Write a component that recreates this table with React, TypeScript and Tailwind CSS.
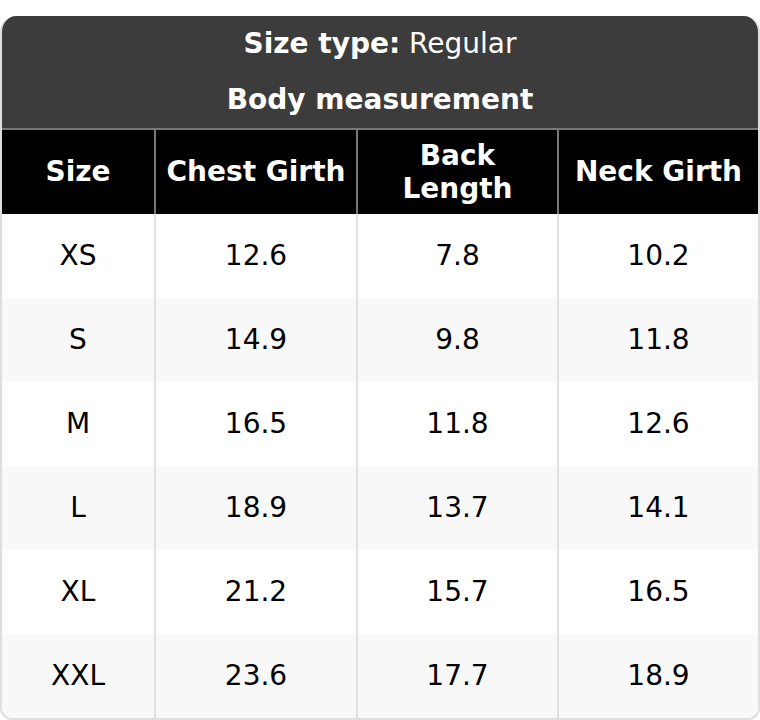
/** Size chart —— body measurement table for one size type. */
const COLS = ["Size", "Chest Girth", "Back Length", "Neck Girth"];

const ROWS: string[][] = [
  ["XS", "12.6", "7.8", "10.2"],
  ["S", "14.9", "9.8", "11.8"],
  ["M", "16.5", "11.8", "12.6"],
  ["L", "18.9", "13.7", "14.1"],
  ["XL", "21.2", "15.7", "16.5"],
  ["XXL", "23.6", "17.7", "18.9"],
];

const GRID = "grid grid-cols-[152px_202px_201px_1fr]";

export default function App() {
  return (
    <div className="bg-white pt-4 text-[28px] leading-[1.18] text-black" style={{ fontFamily: '"DejaVu Sans", Verdana, sans-serif' }}>
      <div className="overflow-hidden rounded-t-2xl rounded-b-xl border-x-2 border-b-2 border-[#dedede]">
        <div className="-mx-[2px] bg-[#3c3c3c] text-center text-white">
          <div className="flex h-14 items-center justify-center"><span><b>Size type:</b> Regular</span></div>
          <div className="flex h-14 items-center justify-center font-bold">Body measurement</div>
        </div>
        <div className={`${GRID} -mx-[2px] border-t-2 border-[#777] bg-black px-[2px] font-bold text-white`}>
          {COLS.map((c, i) => (
            <div key={c} className={`flex h-[84px] items-center justify-center px-1 text-center ${i ? "border-l-2 border-[#777]" : ""}`}>
              {c === "Back Length" ? <span>Back<br />Length</span> : c}
            </div>
          ))}
        </div>
        {ROWS.map((r, ri) => (
          <div key={r[0]} className={`${GRID} ${ri % 2 ? "bg-[#f8f8f8]" : "bg-white"}`}>
            {r.map((v, i) => (
              <div key={i} className={`flex h-[84px] items-center justify-center ${i ? "border-l-2 border-[#e0e0e0]" : ""}`}>{v}</div>
            ))}
          </div>
        ))}
      </div>
    </div>
  );
}
